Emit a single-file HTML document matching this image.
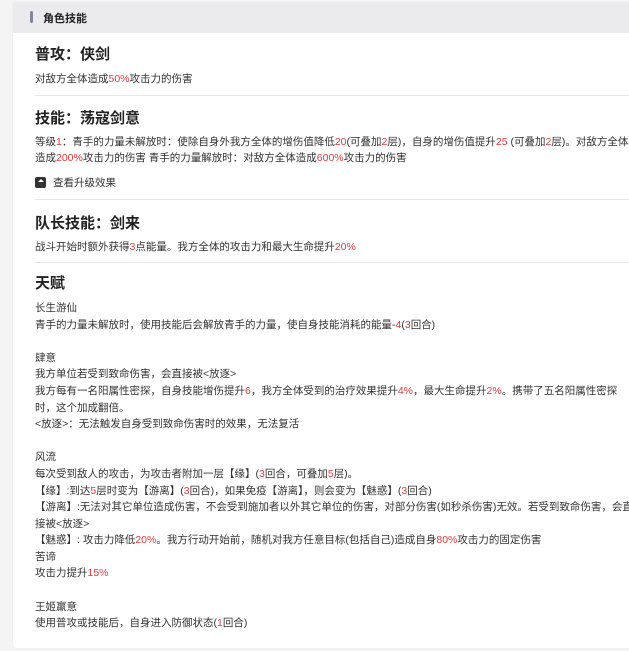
<!DOCTYPE html>
<html><head><meta charset="utf-8"><style>
*{margin:0;padding:0;box-sizing:border-box}
body{width:629px;height:651px;background:#f4f4f4;font-family:"Liberation Sans","Noto Sans CJK SC",sans-serif;color:#333;overflow:hidden;position:relative}
.card{position:absolute;left:13px;top:2px;width:640px;height:646px;background:#fff;border-radius:3px;box-shadow:0 0 2px rgba(0,0,0,.06)}
.hd{height:31px;background:#ebebed;position:relative;border-radius:3px 3px 0 0}
.hd .bar{position:absolute;left:17px;top:9px;width:3px;height:12px;background:#7f8799;border-radius:2px}
.hd span{position:absolute;left:30px;top:8px;font-size:11px;font-weight:bold;color:#222}
.body{padding:0 0 0 22px}
h3{font-size:15px;font-weight:bold;color:#222;line-height:20px}
p{font-size:10.5px;line-height:16.6px;white-space:nowrap}
.r{color:#e4393c}
hr{border:0;border-top:1px solid #e6e6e6;margin-right:0}
.ico{display:inline-block;width:11px;height:11px;background:#333;border-radius:2px;vertical-align:-2px;margin-right:7px;position:relative}
.ico:after{content:"";position:absolute;left:2.5px;top:2px;border:3px solid transparent;border-bottom:3.5px solid #fff;border-top:0}
</style></head><body>
<div class="card">
<div class="hd"><div class="bar"></div><span>角色技能</span></div>
<div class="body">
<h3 style="margin-top:12px">普攻：侠剑</h3>
<p style="margin-top:6px">对敌方全体造成<span class="r">50%</span>攻击力的伤害</p>
<hr style="margin-top:7px">
<h3 style="margin-top:13px">技能：荡寇剑意</h3>
<p style="margin-top:5px">等级<span class="r">1</span>：青手的力量未解放时：使除自身外我方全体的增伤值降低<span class="r">20</span>(可叠加<span class="r">2</span>层)，自身的增伤值提升<span class="r">25</span> (可叠加<span class="r">2</span>层)。对敌方全体</p>
<p>造成<span class="r">200%</span>攻击力的伤害 青手的力量解放时：对敌方全体造成<span class="r">600%</span>攻击力的伤害</p>
<p style="margin-top:8px"><span class="ico"></span>查看升级效果</p>
<hr style="margin-top:8px">
<h3 style="margin-top:14px">队长技能：剑来</h3>
<p style="margin-top:5px">战斗开始时额外获得<span class="r">3</span>点能量。我方全体的攻击力和最大生命提升<span class="r">20%</span></p>
<hr style="margin-top:6px">
<h3 style="margin-top:11px">天赋</h3>
<p style="margin-top:6px">长生游仙</p>
<p>青手的力量未解放时，使用技能后会解放青手的力量，使自身技能消耗的能量-<span class="r">4</span>(<span class="r">3</span>回合)</p>
<p>&nbsp;</p>
<p>肆意</p>
<p>我方单位若受到致命伤害，会直接被&lt;放逐&gt;</p>
<p>我方每有一名阳属性密探，自身技能增伤提升<span class="r">6</span>，我方全体受到的治疗效果提升<span class="r">4%</span>，最大生命提升<span class="r">2%</span>。携带了五名阳属性密探</p>
<p>时，这个加成翻倍。</p>
<p>&lt;放逐&gt;：无法触发自身受到致命伤害时的效果，无法复活</p>
<p>&nbsp;</p>
<p>风流</p>
<p>每次受到敌人的攻击，为攻击者附加一层【缘】(<span class="r">3</span>回合，可叠加<span class="r">5</span>层)。</p>
<p>【缘】:到达<span class="r">5</span>层时变为【游离】(<span class="r">3</span>回合)，如果免疫【游离】，则会变为【魅惑】(<span class="r">3</span>回合)</p>
<p>【游离】:无法对其它单位造成伤害，不会受到施加者以外其它单位的伤害，对部分伤害(如秒杀伤害)无效。若受到致命伤害，会直</p>
<p>接被&lt;放逐&gt;</p>
<p>【魅惑】: 攻击力降低<span class="r">20%</span>。我方行动开始前，随机对我方任意目标(包括自己)造成自身<span class="r">80%</span>攻击力的固定伤害</p>
<p>苦谛</p>
<p>攻击力提升<span class="r">15%</span></p>
<p>&nbsp;</p>
<p>王姬羸意</p>
<p>使用普攻或技能后，自身进入防御状态(<span class="r">1</span>回合)</p>
</div></div>
</body></html>
